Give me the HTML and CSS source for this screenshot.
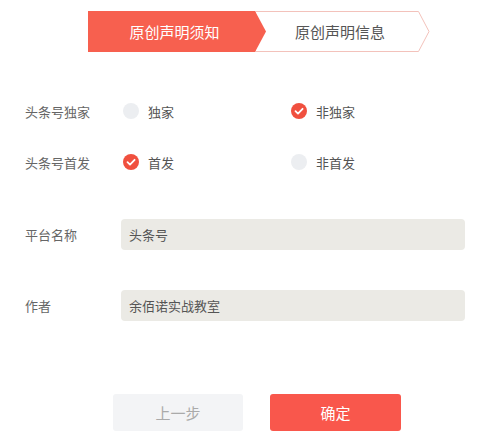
FILE: index.html
```html
<!DOCTYPE html>
<html lang="zh">
<head>
<meta charset="utf-8">
<link rel="stylesheet" href="styles.css">
</head>
<body>
<div class="page">
  <div class="steps">
    <svg class="steps-bg" width="342" height="41" viewBox="0 0 342 41">
      <polygon points="167.5,0.5 330.5,0.5 341,20.5 330.5,40.5 167.5,40.5" fill="#fff" stroke="#f3c2bb" stroke-width="1"/>
      <polygon points="0,0 167,0 178,20.5 167,41 0,41" fill="#f7604f"/>
    </svg>
    <div class="step step-active">原创声明须知</div>
    <div class="step step-next">原创声明信息</div>
  </div>

  <div class="form">
    <div class="row row-radio first">
      <div class="label">头条号独家</div>
      <div class="options">
        <div class="option"><span class="radio"></span><span class="opt-text">独家</span></div>
        <div class="option"><span class="radio checked"><svg width="16" height="16" viewBox="0 0 16 16"><path d="M4.5 8.2 L7 10.6 L11.6 5.8" fill="none" stroke="#fff" stroke-width="1.8" stroke-linecap="round" stroke-linejoin="round"/></svg></span><span class="opt-text">非独家</span></div>
      </div>
    </div>
    <div class="row row-radio second">
      <div class="label">头条号首发</div>
      <div class="options">
        <div class="option"><span class="radio checked"><svg width="16" height="16" viewBox="0 0 16 16"><path d="M4.5 8.2 L7 10.6 L11.6 5.8" fill="none" stroke="#fff" stroke-width="1.8" stroke-linecap="round" stroke-linejoin="round"/></svg></span><span class="opt-text">首发</span></div>
        <div class="option"><span class="radio"></span><span class="opt-text">非首发</span></div>
      </div>
    </div>
    <div class="row row-input third">
      <div class="label">平台名称</div>
      <div class="input">头条号</div>
    </div>
    <div class="row row-input fourth">
      <div class="label">作者</div>
      <div class="input">余佰诺实战教室</div>
    </div>
  </div>

  <div class="actions">
    <button class="btn btn-prev">上一步</button>
    <button class="btn btn-ok">确定</button>
  </div>
</div>
</body>
</html>
```

FILE: styles.css
```css
* { box-sizing: border-box; }
html, body { margin: 0; padding: 0; background: #fff; }
body {
  font-family: "Noto Sans CJK SC", "Noto Sans", sans-serif;
  color: #666;
  width: 499px;
  height: 437px;
  overflow: hidden;
}
.steps {
  position: relative;
  display: flex;
  width: 342px;
  height: 41px;
  margin: 11px 0 0 88px;
}
.steps-bg {
  position: absolute;
  left: 0;
  top: 0;
}
.step {
  position: relative;
  display: flex;
  align-items: center;
  justify-content: center;
  font-size: 15px;
  color: #555;
  line-height: 1;
}
.step-active {
  width: 173px;
  color: #fff;
}
.step-next { width: 158px; }

.form {
  padding-left: 25px;
}
.row {
  display: flex;
  align-items: center;
}
.row-radio { height: 30px; }
.row-input { height: 31px; }
.first { margin-top: 44px; }
.second { margin-top: 21px; }
.third { margin-top: 42px; }
.fourth { margin-top: 40px; }

.label {
  width: 96px;
  font-size: 13px;
  color: #666;
}
.options {
  display: flex;
  padding-left: 2px;
}
.option {
  display: flex;
  align-items: center;
  width: 168px;
}
.radio {
  width: 16px;
  height: 16px;
  border-radius: 50%;
  background: #eceef1;
  display: flex;
}
.radio.checked { background: #f0503f; }
.opt-text {
  margin-left: 9px;
  font-size: 13px;
  color: #555;
}
.input {
  width: 344px;
  height: 31px;
  background: #ebeae5;
  border-radius: 4px;
  padding-left: 8px;
  display: flex;
  align-items: center;
  font-size: 13px;
  color: #555;
}

.actions {
  display: flex;
  gap: 27px;
  margin: 73px 0 0 113px;
}
.btn {
  width: 130px;
  height: 37px;
  border: none;
  border-radius: 3px;
  font-family: "Noto Sans CJK SC", "Noto Sans", sans-serif;
  font-size: 15px;
  padding: 0;
}
.btn-prev {
  background: #f3f4f6;
  color: #aaa;
}
.btn-ok {
  width: 131px;
  background: #f9574c;
  color: #fff;
}
```
